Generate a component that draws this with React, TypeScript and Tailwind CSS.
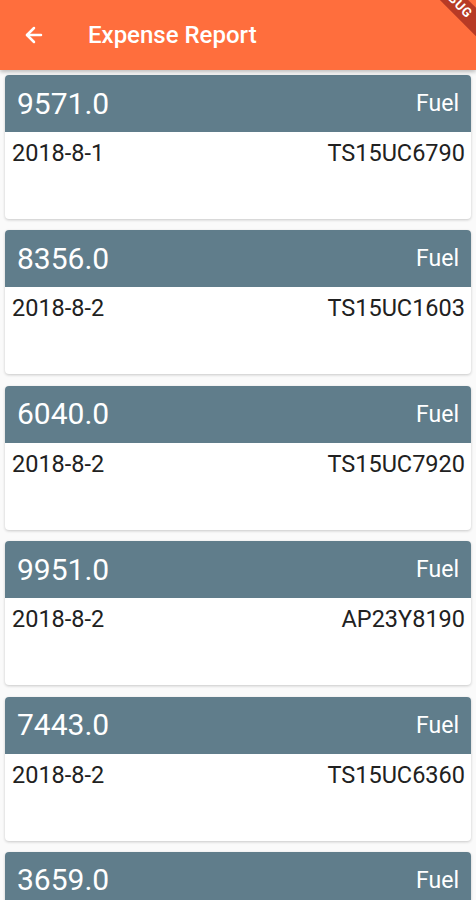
import { ArrowLeft } from 'lucide-react';

type Expense = {
  amount: string;
  type: string;
  date: string;
  vehicle: string;
};

const expenses: Expense[] = [
  { amount: '9571.0', type: 'Fuel', date: '2018-8-1', vehicle: 'TS15UC6790' },
  { amount: '8356.0', type: 'Fuel', date: '2018-8-2', vehicle: 'TS15UC1603' },
  { amount: '6040.0', type: 'Fuel', date: '2018-8-2', vehicle: 'TS15UC7920' },
  { amount: '9951.0', type: 'Fuel', date: '2018-8-2', vehicle: 'AP23Y8190' },
  { amount: '7443.0', type: 'Fuel', date: '2018-8-2', vehicle: 'TS15UC6360' },
  { amount: '3659.0', type: 'Fuel', date: '2018-8-3', vehicle: 'TS15UC2210' },
];

const ExpenseCard = ({ item }: { item: Expense }) => (
  <div className="h-[144px] shrink-0 rounded-[4px] bg-white overflow-hidden shadow-[0_1px_3px_rgba(0,0,0,0.2)]">
    <div className="h-[57px] bg-[#607d8b] flex items-center justify-between pl-[12px] pr-[12px] text-white">
      <span className="text-[30px] leading-none">{item.amount}</span>
      <span className="text-[23px] leading-none">{item.type}</span>
    </div>
    <div className="flex justify-between pl-[7px] pr-[6px] pt-[10px] text-[23.5px] leading-none text-[#212121]">
      <span>{item.date}</span>
      <span>{item.vehicle}</span>
    </div>
  </div>
);

export default function App() {
  return (
    <div className="w-[476px] h-[900px] overflow-hidden bg-[#fafafa] relative" style={{ fontFamily: 'Roboto, "Noto Sans", sans-serif' }}>
      {/* App bar */}
      <div className="h-[70px] bg-[#ff6e3d] flex items-center relative z-10 shadow-[0_2px_4px_rgba(0,0,0,0.25)]">
        <ArrowLeft className="w-[24px] h-[24px] text-white ml-[22px]" strokeWidth={2.5} />
        <span className="ml-[42px] text-white text-[24px] font-medium">Expense Report</span>
      </div>

      {/* Debug ribbon */}
      <div className="absolute top-[-10px] right-[-38px] w-[120px] h-[20px] bg-[#b73a25] rotate-45 z-20 flex items-center justify-center">
        <span className="text-white text-[13px] font-bold tracking-wider">DEBUG</span>
      </div>

      {/* List */}
      <div className="flex flex-col gap-[11.4px] px-[5px] pt-[5px]">
        {expenses.map((e, i) => (
          <ExpenseCard key={i} item={e} />
        ))}
      </div>
    </div>
  );
}
